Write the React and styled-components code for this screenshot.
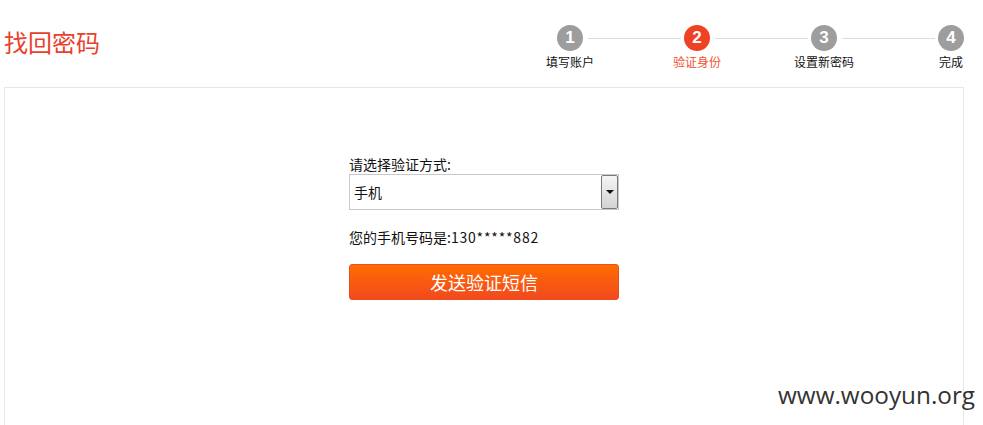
import styled, { createGlobalStyle } from "styled-components";

const steps = ["填写账户", "验证身份", "设置新密码", "完成"];
const current = 1;

const GlobalStyle = createGlobalStyle`
  html, body {
    margin: 0;
    padding: 0;
    background: #fff;
    overflow: hidden;
  }
  body {
    font-family: "Noto Sans CJK SC", "Liberation Sans", sans-serif;
    color: #222;
  }
`;

export default function App() {
  return (
    <Page>
      <GlobalStyle />
      <Header>
        <Title>找回密码</Title>
        <Stepper>
          {steps.map((label, i) => (
            <Step key={label} first={i === 0}>
              <Circle active={i === current}>{i + 1}</Circle>
              <StepLabel active={i === current}>{label}</StepLabel>
            </Step>
          ))}
        </Stepper>
      </Header>
      <Panel>
        <Form>
          <FieldLabel>请选择验证方式:</FieldLabel>
          <Select>
            <span>手机</span>
            <ArrowBox>
              <Triangle />
            </ArrowBox>
          </Select>
          <PhoneText>
            您的手机号码是:<Digits>130*****882</Digits>
          </PhoneText>
          <SendButton>发送验证短信</SendButton>
        </Form>
      </Panel>
      <Watermark>www.wooyun.org</Watermark>
    </Page>
  );
}

const Page = styled.div`
  position: relative;
  width: 983px;
  height: 425px;
  overflow: hidden;
`;

const Header = styled.div`
  display: flex;
  justify-content: space-between;
  align-items: flex-start;
  height: 87px;
  padding: 0 0 0 4px;
`;

const Title = styled.h1`
  margin: 29px 0 0;
  font-size: 24px;
  line-height: 26px;
  font-weight: normal;
  color: #e8412c;
`;

const Stepper = styled.div`
  display: grid;
  grid-template-columns: repeat(4, 64px);
  column-gap: 63px;
  margin-top: 25px;
`;

const Step = styled.div`
  position: relative;
  display: flex;
  flex-direction: column;
  align-items: center;

  &::before {
    content: "";
    display: ${({ first }) => (first ? "none" : "block")};
    position: absolute;
    top: 13px;
    right: calc(50% + 16px);
    width: 93px;
    height: 1px;
    background: #dcdcdc;
  }
`;

const Circle = styled.div`
  width: 26px;
  height: 26px;
  border-radius: 50%;
  background: ${({ active }) => (active ? "#ef4123" : "#9d9d9d")};
  color: #fff;
  font-family: "Liberation Sans", Arial, sans-serif;
  font-weight: bold;
  font-size: 17px;
  line-height: 26px;
  text-align: center;
`;

const StepLabel = styled.div`
  margin-top: 3px;
  font-size: 12px;
  line-height: 16px;
  white-space: nowrap;
  color: ${({ active }) => (active ? "#f0502f" : "#111")};
`;

const Panel = styled.div`
  margin-left: 4px;
  width: 960px;
  height: 400px;
  box-sizing: border-box;
  border: 1px solid #e6e6e6;
  border-bottom: none;
`;

const Form = styled.div`
  width: 270px;
  margin: 0 auto;
  padding-top: 66px;
  display: flex;
  flex-direction: column;
`;

const FieldLabel = styled.div`
  font-size: 14px;
  line-height: 20px;
  color: #111;
`;

const Select = styled.div`
  position: relative;
  height: 36px;
  box-sizing: border-box;
  border: 1px solid #c8c8c8;
  display: flex;
  align-items: center;
  padding-left: 4px;
  font-size: 14px;
  color: #111;
`;

const ArrowBox = styled.div`
  position: absolute;
  top: 0;
  right: 0;
  bottom: 0;
  width: 17px;
  box-sizing: border-box;
  border: 1px solid #7a7a7a;
  border-radius: 2px;
  background: linear-gradient(#f4f4f4, #d4d4d4);
  display: flex;
  align-items: center;
  justify-content: center;
`;

const Triangle = styled.div`
  width: 0;
  height: 0;
  border-left: 4px solid transparent;
  border-right: 4px solid transparent;
  border-top: 4px solid #111;
`;

const PhoneText = styled.div`
  margin-top: 17px;
  font-size: 14px;
  line-height: 20px;
  color: #111;
`;

const Digits = styled.span`
  letter-spacing: 0.8px;
`;

const SendButton = styled.button`
  margin-top: 17px;
  height: 36px;
  box-sizing: border-box;
  border: 1px solid #e8501e;
  border-radius: 3px;
  background: linear-gradient(#ff6c02, #f2491e);
  color: #fff;
  font-family: "Noto Sans CJK SC", sans-serif;
  font-size: 18px;
  line-height: 34px;
  padding: 0;
  cursor: pointer;
`;

const Watermark = styled.div`
  position: absolute;
  left: 778px;
  top: 378px;
  font-family: "Open Sans", sans-serif;
  font-size: 24.3px;
  line-height: 33px;
  color: #333;
`;
